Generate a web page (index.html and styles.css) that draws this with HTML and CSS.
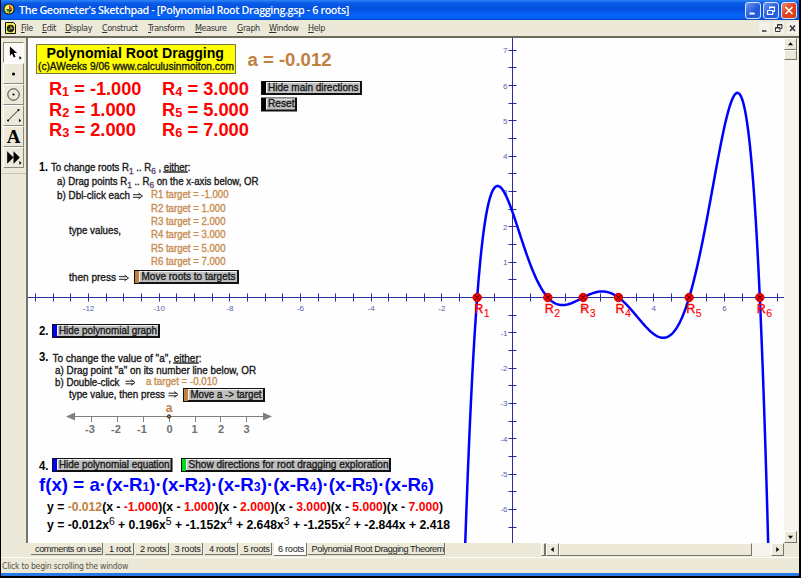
FILE: index.html
```html
<!DOCTYPE html>
<html lang="en">
<head>
<meta charset="utf-8">
<title>The Geometer's Sketchpad</title>
<link rel="stylesheet" href="styles.css">
</head>
<body>
<div class="window">
  <header class="titlebar">
    <svg class="app-icon" viewBox="0 0 12 12"><circle cx="6" cy="6" r="5.6" fill="#111"/><circle cx="6" cy="6" r="4.6" fill="#f5e63c"/><path d="M6 1.5 9.5 6H6z" fill="#e02818"/><path d="M3 6h4L5 9.5z" fill="#188030"/><path d="M2.5 5 6 2v4z" fill="#fff8a0"/><path d="M6.5 6.5h3L6 10.5z" fill="#111"/></svg>
    <h1>The Geometer's Sketchpad - [Polynomial Root Dragging.gsp - 6 roots]</h1>
    <div class="win-buttons">
      <button class="wb"><svg viewBox="0 0 16 17"><path d="M4 12h6" stroke="#fff" stroke-width="2.2"/></svg></button>
      <button class="wb"><svg viewBox="0 0 16 17"><path d="M6.5 7V4.5h5.500v5H10M6.500 5h5.500M4 8.500h6v4.500H4zM4 8.500h6" fill="none" stroke="#fff" stroke-width="1.300"/></svg></button>
      <button class="wb close"><svg viewBox="0 0 16 17"><path d="M4 4.500l8 8M12 4.500l-8 8" stroke="#fff" stroke-width="2"/></svg></button>
    </div>
  </header>
  <nav class="menubar">
    <svg class="doc-icon" viewBox="0 0 11 12"><path d="M.5.5h8l2 2v9H.5z" fill="#f7f04a" stroke="#111"/><circle cx="5.500" cy="6.500" r="3.700" fill="#222"/><path d="M5.500 3.500 8 7H5.500z" fill="#e8c020"/><path d="M3 6.500h3L4.500 9z" fill="#2c9a50"/></svg>
    <div class="menus">
      <span><u>F</u>ile</span><span><u>E</u>dit</span><span><u>D</u>isplay</span><span><u>C</u>onstruct</span><span><u>T</u>ransform</span><span><u>M</u>easure</span><span><u>G</u>raph</span><span><u>W</u>indow</span><span><u>H</u>elp</span>
    </div>
    <div class="mdi">
      <svg viewBox="0 0 11 12"><path d="M3 9h4.500" stroke="#333" stroke-width="1.500"/></svg>
      <svg viewBox="0 0 11 12"><path d="M4.500 5V2.500H9V6.500H7.500M4.500 3H9M2.500 5.500H7V9.500H2.500zM2.500 6H7" fill="none" stroke="#333"/></svg>
      <svg viewBox="0 0 11 12"><path d="M3 3.500l5 5.500M8 3.500L3 9" stroke="#333" stroke-width="1.500"/></svg>
    </div>
  </nav>
  <div class="work">
    <aside class="toolbox">
      <button class="tool on"><svg viewBox="0 0 20 21"><path d="M6 4v10l2.400-2.200 2 4.200 1.900-.9-2-4H14z" fill="#000"/><path d="M16.500 14.500l2.500 2-2.500 2z"/></svg></button>
      <button class="tool"><svg viewBox="0 0 20 21"><circle cx="10" cy="11" r="1.700"/></svg></button>
      <button class="tool"><svg viewBox="0 0 20 21"><circle cx="10" cy="10.500" r="6.300" fill="none" stroke="#222"/><circle cx="10" cy="10.500" r="1.200"/></svg></button>
      <button class="tool"><svg viewBox="0 0 20 21"><path d="M4 16 15 5" stroke="#111"/><circle cx="4" cy="16" r="1.200"/><circle cx="15.500" cy="4.500" r="1.200"/><path d="M16 14l2.500 2-2.500 2z"/></svg></button>
      <button class="tool letter">A</button>
      <button class="tool"><svg viewBox="0 0 20 21"><path d="M3 3.500l7 7-7 7zM10 3.500l7 7-7 7z"/><path d="M16.500 14.500l2.500 2-2.500 2z"/></svg></button>
    </aside>
    <main class="doc">
      <svg class="sketch" viewBox="28 38 756 505">
        <g id="axes" class="axes"></g>
        <path id="curve" class="curve"/>
        <g id="points"></g>

        <rect class="banner" x="36.500" y="44.500" width="199" height="29"/>
        <text class="b" font-size="14.500" x="46.500" y="58" textLength="177.500">Polynomial Root Dragging</text>
        <text class="note" font-size="10.300" x="38" y="70.300" textLength="196">(c)AWeeks 9/06 www.calculusinmoiton.com</text>
        <text class="b tan" font-size="18" x="247.500" y="66" textLength="84">a = -0.012</text>

        <g class="b red" font-size="18">
          <text x="49" y="95" textLength="92.500">R<tspan class="s" dy="1">1</tspan><tspan dy="-1"> = -1.000</tspan></text>
          <text x="49" y="115.500" textLength="87">R<tspan class="s" dy="1">2</tspan><tspan dy="-1"> = 1.000</tspan></text>
          <text x="49" y="135.500" textLength="87">R<tspan class="s" dy="1">3</tspan><tspan dy="-1"> = 2.000</tspan></text>
          <text x="162" y="95" textLength="87">R<tspan class="s" dy="1">4</tspan><tspan dy="-1"> = 3.000</tspan></text>
          <text x="162" y="115.500" textLength="87">R<tspan class="s" dy="1">5</tspan><tspan dy="-1"> = 5.000</tspan></text>
          <text x="162" y="135.500" textLength="87">R<tspan class="s" dy="1">6</tspan><tspan dy="-1"> = 7.000</tspan></text>
        </g>

        <g class="b" font-size="12.500">
          <text x="39" y="171" textLength="9">1.</text><text x="39" y="335" textLength="9.500">2.</text><text x="39" y="361" textLength="9.500">3.</text><text x="39" y="470" textLength="9.500">4.</text>
        </g>

        <g class="note" font-size="10.500">
          <text x="51" y="170.500" textLength="139.500">To change roots R<tspan class="t" dy="3">1</tspan><tspan dy="-3"> .. R</tspan><tspan class="t" dy="3">6</tspan><tspan dy="-3"> , </tspan><tspan class="u">either</tspan>:</text>
          <text x="57" y="185" textLength="201.500">a) Drag points R<tspan class="t" dy="3">1</tspan><tspan dy="-3"> .. R</tspan><tspan class="t" dy="3">6</tspan><tspan dy="-3"> on the x-axis below, OR</tspan></text>
          <text x="57" y="199" textLength="73">b) Dbl-click each</text>
          <text x="69" y="234" textLength="52">type values,</text>
          <text x="69" y="281" textLength="47">then press</text>
          <text x="52.500" y="361.500" textLength="149">To change the value of "a", <tspan class="u">either</tspan>:</text>
          <text x="55" y="374" textLength="201">a) Drag point "a" on its number line below, OR</text>
          <text x="55" y="386" textLength="64.500">b) Double-click</text>
          <text x="69" y="398" textLength="96">type value, then press</text>
        </g>
        <g class="implies">
          <path d="M133 194.700h8M133 197.300h8M138.500 193l4 3-4 3"/>
          <path d="M119 276.700h8M119 279.300h8M124.500 275l4 3-4 3"/>
          <path d="M125.500 381.200h8M125.500 383.800h8M131 379.500l4 3-4 3"/>
          <path d="M168.500 393.200h8M168.500 395.800h8M174 391.500l4 3-4 3"/>
        </g>
        <g class="note tan" font-size="10.500">
          <text x="151" y="198.300" textLength="77.500">R1 target = -1.000</text>
          <text x="151" y="211.600" textLength="74.500">R2 target = 1.000</text>
          <text x="151" y="224.900" textLength="74.500">R3 target = 2.000</text>
          <text x="151" y="238.200" textLength="74.500">R4 target = 3.000</text>
          <text x="151" y="251.500" textLength="74.500">R5 target = 5.000</text>
          <text x="151" y="264.800" textLength="74.500">R6 target = 7.000</text>
          <text x="146" y="385" textLength="71.500">a target = -0.010</text>
        </g>

        <g id="actions"></g>

        <g class="numline">
          <path d="M70 416.500h198M91.500 417v5M117.500 417v5M143.500 417v5M169.500 417v5M195.500 417v5M220.500 417v5M246.500 417v5"/>
          <path class="tip" d="M66 416.500l9-4v8zM272 416.500l-9-4v8z"/>
          <g class="b" font-size="11" text-anchor="middle">
            <text x="90" y="433">-3</text><text x="116" y="433">-2</text><text x="142" y="433">-1</text><text x="169.500" y="433">0</text><text x="194.500" y="433">1</text><text x="221" y="433">2</text><text x="246.500" y="433">3</text>
          </g>
        </g>
        <circle cx="169" cy="416.500" r="1.600" fill="#c08040" stroke="#111"/>
        <text class="b tan" font-size="12" x="165.700" y="412">a</text>

        <text class="b blue" font-size="19" x="39" y="491" textLength="395">f(x) = a·(x-R<tspan class="s">1</tspan>)·(x-R<tspan class="s">2</tspan>)·(x-R<tspan class="s">3</tspan>)·(x-R<tspan class="s">4</tspan>)·(x-R<tspan class="s">5</tspan>)·(x-R<tspan class="s">6</tspan>)</text>
        <text class="b" font-size="12.300" x="47" y="510.500" textLength="396">y = <tspan class="tan">-0.012</tspan>(x - <tspan class="red">-1.000</tspan>)(x - <tspan class="red">1.000</tspan>)(x - <tspan class="red">2.000</tspan>)(x - <tspan class="red">3.000</tspan>)(x - <tspan class="red">5.000</tspan>)(x - <tspan class="red">7.000</tspan>)</text>
        <text class="b" font-size="12.300" x="47" y="529" textLength="403">y = -0.012x<tspan class="p" dy="-4">6</tspan><tspan dy="4"> + 0.196x</tspan><tspan class="p" dy="-4">5</tspan><tspan dy="4"> + -1.152x</tspan><tspan class="p" dy="-4">4</tspan><tspan dy="4"> + 2.648x</tspan><tspan class="p" dy="-4">3</tspan><tspan dy="4"> + -1.255x</tspan><tspan class="p" dy="-4">2</tspan><tspan dy="4"> + -2.844x + 2.418</tspan></text>
      </svg>
      <div class="vscroll">
        <span class="sb"><svg viewBox="0 0 13 12"><path d="M3.500 7.500h6l-3-3.500z"/></svg></span>
        <span class="sb vthumb"></span>
        <span class="track"></span>
        <span class="sb"><svg viewBox="0 0 13 12"><path d="M3.500 4.500h6l-3 3.500z"/></svg></span>
      </div>
      <div class="tabs">
        <span>comments on use</span><span>1 root</span><span>2 roots</span><span>3 roots</span><span>4 roots</span><span>5 roots</span><span class="active">6 roots</span><span>Polynomial Root Dragging Theorem</span>
      </div>
      <div class="hscroll">
        <span class="sb split"></span>
        <span class="sb arrow"><svg viewBox="0 0 13 13"><path d="M8 3.500v6L4.500 6.500z"/></svg></span>
        <span class="sb hthumb"></span>
        <span class="track"></span>
        <span class="sb arrow"><svg viewBox="0 0 13 13"><path d="M5 3.500v6l3.500-3z"/></svg></span>
      </div>
    </main>
  </div>
  <footer class="status">Click to begin scrolling the window</footer>
</div>
<script src="sketch.js"></script>
</body>
</html>
```
FILE: styles.css
```css
* { box-sizing: border-box; }
body { margin: 0; background: #000; font-family: "Liberation Sans", Arial, sans-serif; }
button { border: 0; padding: 0; margin: 0; background: none; }
svg { display: block; }

.window { width: 801px; height: 578px; display: flex; flex-direction: column; background: #ece9d8; border: solid #000; border-width: 0 2px 2px 1px; overflow: hidden; }

.titlebar { height: 20px; flex: none; display: flex; align-items: center; padding: 0 2px; background: linear-gradient(#2f86f4 0, #0a5be8 3px, #0450dc 9px, #0662fa 15px, #0560f5 18px, #0340c0 20px); }
.app-icon { width: 12px; height: 12px; margin-top: -2px; }
.titlebar h1 { margin: 0 0 0 4px; flex: 1; color: #fff; font: 600 10.8px/18px "Open Sans", sans-serif; white-space: nowrap; letter-spacing: -.4px; }
.win-buttons { display: flex; gap: 2px; }
.wb { width: 16px; height: 17px; border: 1px solid #d6e4fb; border-radius: 3px; background: linear-gradient(135deg, #6d95f2, #2257dc 60%, #2c62e4); }
.wb svg { width: 14px; height: 15px; }
.wb.close { background: linear-gradient(135deg, #f09070, #e0401c 50%, #d84018); }

.menubar { height: 16px; flex: none; display: flex; align-items: center; padding-left: 4px; }
.doc-icon { width: 11px; height: 12px; }
.menus { flex: 1; display: grid; grid-template-columns: 21px 23px 37px 46px 47px 42px 32px 39px 30px; padding-left: 5px; font: 9px/14px "DejaVu Sans Condensed", "DejaVu Sans", sans-serif; font-stretch: condensed; letter-spacing: -.4px; color: #333; white-space: nowrap; }
.menus u { text-underline-offset: 1px; }
.mdi { display: flex; gap: 3px; padding-right: 1px; }
.mdi svg { width: 11px; height: 12px; background: #f4f2e8; }

.work { height: 521px; flex: none; display: flex; border-top: 2px solid #6c6b5e; }
.toolbox { width: 27px; padding: 4px 0 0 2px; border-right: 2px solid #77756a; background: linear-gradient(#c9c5b2, #c9c5b2) 0 135px / 25px 1px no-repeat; height: 505px; }
.tool { display: block; width: 21px; height: 21px; border: 1px solid; border-color: #fff #8d8a7c #8d8a7c #fff; }
.tool svg { width: 19px; height: 19px; }
.tool.on { background: #fbfaf6; border-color: #8d8a7c #fff #fff #8d8a7c; }
.tool.letter { font: bold 19px/19px "Liberation Serif", serif; color: #000; }

.doc { flex: 1; display: grid; grid-template: 505px 14px / 512px 244px 14px; }
.sketch { grid-column: 1 / 3; width: 756px; height: 505px; background: #fefefe; }
.vscroll { display: flex; flex-direction: column; padding-right: 1px; background: #f6f4ea; }
.sb { display: block; background: #ece9d8; border: 1px solid; border-color: #fff #77756a #77756a #fff; }
.track { flex: 1; background: #f6f4ec; }
.vscroll .sb { height: 12px; flex: none; }
.vscroll .sb svg { width: 11px; height: 10px; }
.vscroll .vthumb { height: 10px; }

.tabs { display: flex; align-items: flex-start; gap: 2px; padding-left: 3px; }
.tabs span { height: 12px; padding: 0 3px 0 4px; font-size: 9.2px; line-height: 12px; white-space: nowrap; color: #222; border: solid #77756a; border-width: 0 1px 1px 0; }
.tabs span:nth-child(1) { width: 72px; letter-spacing: -.42px; }
.tabs span:nth-child(2) { width: 29px; letter-spacing: -.3px; }
.tabs span:nth-child(n+3) { width: 32.5px; letter-spacing: -.3px; }
.tabs .active { background: #fff; height: 13px; line-height: 13px; }
.tabs span:last-child { width: 137px; margin-left: -1px; letter-spacing: -.42px; }
.hscroll { display: flex; height: 13px; padding-left: 1px; }
.split { width: 5px; border-right-width: 2px; }
.arrow { width: 13px; }
.arrow svg { width: 11px; height: 11px; }
.hthumb { width: 193px; }

.status { height: 16px; flex: none; padding-left: 1px; font: 8.7px/16px "DejaVu Sans Condensed", "DejaVu Sans", sans-serif; font-stretch: condensed; letter-spacing: -.28px; color: #55544c; border-top: 1px solid #fff; }
.window::after { content: ""; flex: none; height: 3px; background: #2a78e4; }

.sketch text { white-space: pre; }
.b { font-weight: bold; }
.note { fill: #181818; stroke: #181818; stroke-width: .35px; }
.tan { fill: #c08040; }
.note.tan { fill: #c88c50; stroke: #c88c50; }
.red { fill: #f00; }
.blue { fill: #00f; }
.s { font-size: 12.5px; }
.t { font-size: 9px; fill: #604070; stroke: #604070; }
.p { font-size: 10.5px; font-weight: normal; }
.u { text-decoration: underline; }
.banner { fill: #ff0; stroke: #77774a; }
.implies path { fill: none; stroke: #222; stroke-width: 1; }
.axes path { stroke: #2c2c9c; fill: none; }
.axes text { font-size: 8px; fill: #5560b0; }
.curve { fill: none; stroke: #00f; stroke-width: 2.5; }
.root { fill: #f00; stroke: #c00; }
.root-x { stroke: #300; stroke-width: 1; fill: none; }
.root-name { font-size: 12.5px; fill: #f00; stroke: #f00; stroke-width: .35px; }
.root-name tspan { font-size: 10.5px; stroke-width: .1px; }
.numline path { stroke: #808080; fill: none; }
.numline .tip { fill: #808080; stroke: none; }
.numline text { fill: #707070; }
.act-face { fill: #c0c0c0; }
```
FILE: sketch.js
```js
const NS = "http://www.w3.org/2000/svg";
function add(parent, tag, attrs, text) {
  const el = document.createElementNS(NS, tag);
  for (const k in attrs) el.setAttribute(k, attrs[k]);
  if (text !== undefined) el.textContent = text;
  parent.appendChild(el);
  return el;
}

// Graph coordinates: origin and pixels per unit
const OX = 512.5, OY = 297.5, U = 35.33;
const roots = [-1, 1, 2, 3, 5, 7];
const a = -2.418 / 210;
const f = x => roots.reduce((p, r) => p * (x - r), -a) * -1;

const axes = document.getElementById("axes");
const snap = v => Math.floor(v) + 0.5;
let d = `M28 ${OY}H784M${OX} 38V543`;
for (let i = -27; i <= 15; i++) if (i) d += `M${snap(OX + i * U / 2)} ${OY - 4}v8`;
for (let i = -13; i <= 14; i++) if (i) d += `M${OX - 4} ${snap(OY - i * U / 2)}h8`;
add(axes, "path", { d });
for (let n = -12; n <= 6; n += 2)
  if (n) add(axes, "text", { x: OX + n * U, y: 311, "text-anchor": "middle" }, n);
for (let n = -7; n <= 7; n++)
  if (n) add(axes, "text", { x: 507.5, y: OY - n * U + 3, "text-anchor": "end" }, n);

let c = "";
for (let x = -1.5; x <= 7.5; x += 0.02) {
  const y = Math.max(-12, f(x));
  c += (c ? "L" : "M") + (OX + x * U).toFixed(2) + " " + (OY - y * U).toFixed(2);
}
document.getElementById("curve").setAttribute("d", c);

const pts = document.getElementById("points");
roots.forEach((r, i) => {
  const x = OX + r * U;
  add(pts, "circle", { class: "root", cx: x, cy: OY, r: 4.2 });
  add(pts, "path", { class: "root-x", d: `M${x - 2.5} ${OY - 2.5}l5 5m0 -5l-5 5` });
  const t = add(pts, "text", { class: "root-name", x: x - 3, y: 313 }, "R");
  add(t, "tspan", { dx: 0.5, dy: 3.5 }, i + 1);
});

// x, y, width, label start, label width, marker colour, label
const actions = [
  [261, 81, 101, 268, 90.5, "#000", "Hide main directions"],
  [261, 97.5, 36, 268, 26.5, "#000", "Reset"],
  [134, 270, 105, 141.5, 94, "#c08040", "Move roots to targets"],
  [52, 324, 108, 59, 98, "#00f", "Hide polynomial graph"],
  [183, 388, 82, 190.5, 71, "#c08040", "Move a -> target"],
  [52, 458, 120.5, 59, 110.5, "#00f", "Hide polynomial equation"],
  [181, 458, 210, 188.5, 200, "#00d820", "Show directions for root dragging exploration"]
];
const host = document.getElementById("actions");
for (const [x, y, w, tx, tw, color, label] of actions) {
  const g = add(host, "g", {});
  add(g, "rect", { x, y, width: w, height: 14, fill: "#111" });
  add(g, "rect", { x: x + 5, y: y + 1, width: w - 7, height: 11, class: "act-face" });
  add(g, "path", { d: `M${x + 5.5} ${y + 12}V${y + 1.5}H${x + w - 2}`, stroke: "#f4f4f4", fill: "none" });
  add(g, "rect", { x: x + 1, y: y + 1, width: 4, height: 12, fill: color });
  add(g, "text", { class: "note", "font-size": 10.5, x: tx, y: y + 9.7, textLength: tw }, label);
}

document.querySelectorAll(".sketch text[textLength]").forEach(t => t.setAttribute("lengthAdjust", "spacingAndGlyphs"));
```
